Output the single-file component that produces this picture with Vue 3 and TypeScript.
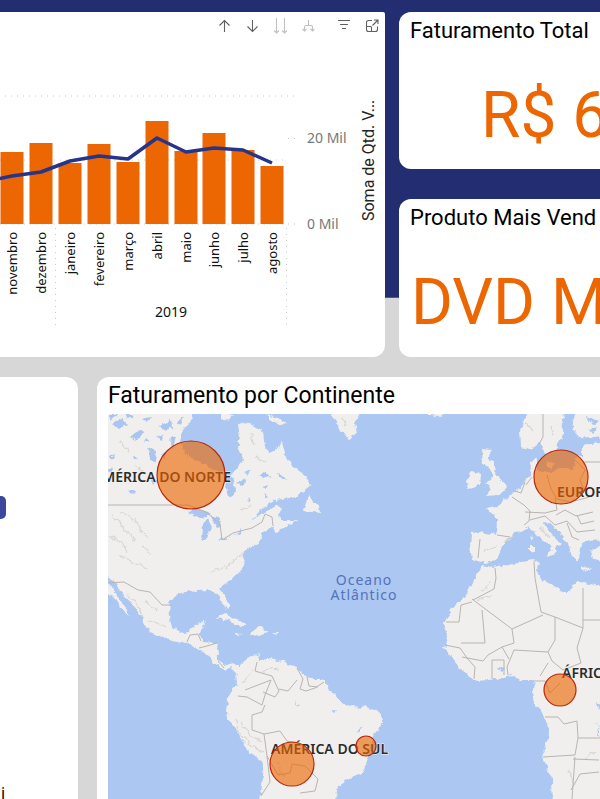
<script setup lang="ts">
interface Month {
  label: string
  x: number
  top: number
  line: number
}

interface Bubble {
  x: number
  y: number
  r: number
}

const baseline = 224
const barWidth = 23

const months: Month[] = [
  { label: 'novembro', x: 12, top: 152, line: 176 },
  { label: 'dezembro', x: 41, top: 143, line: 172 },
  { label: 'janeiro', x: 70, top: 163, line: 161 },
  { label: 'fevereiro', x: 99, top: 144, line: 156 },
  { label: 'março', x: 128, top: 162, line: 159 },
  { label: 'abril', x: 157, top: 121, line: 138 },
  { label: 'maio', x: 186, top: 151, line: 152 },
  { label: 'junho', x: 214, top: 133, line: 148 },
  { label: 'julho', x: 243, top: 150, line: 150 },
  { label: 'agosto', x: 272, top: 166, line: 163 }
]

const trend = ['-17,182', ...months.map((m) => `${m.x},${m.line}`)].join(' ')

const bubbles: Bubble[] = [
  { x: 191, y: 475, r: 34 },
  { x: 561, y: 477, r: 27 },
  { x: 560, y: 690, r: 16 },
  { x: 292, y: 764, r: 22 },
  { x: 366, y: 746, r: 10 }
]
</script>

<template>
  <main class="page">
    <section class="row top">
      <article class="card chart-card">
        <div class="toolbar">
          <button type="button" aria-label="Drill up">
            <svg viewBox="0 0 16 16"><path d="M8.500 14V2.500M3.500 7.500l5-5 5 5" /></svg>
          </button>
          <button type="button" aria-label="Drill down">
            <svg viewBox="0 0 16 16"><path d="M8.500 2v11.500M3.500 8.500l5 5 5-5" /></svg>
          </button>
          <button type="button" class="faint" aria-label="Next level">
            <svg viewBox="0 0 16 16"><path d="M4.500 0v15M2 12.500L4.500 15 7 12.500M12.500 0v15M10 12.500l2.500 2.500 2.500-2.500" /></svg>
          </button>
          <button type="button" class="faint" aria-label="Expand all">
            <svg viewBox="0 0 16 16"><path d="M8.500 2v5M4.500 13V9a1.500 1.500 0 0 1 1.500-1.500h5a1.500 1.500 0 0 1 1.500 1.500v4M2.500 11l2 2 2-2M10.500 11l2 2 2-2" /></svg>
          </button>
          <button type="button" class="apart" aria-label="Filters">
            <svg viewBox="0 0 16 16"><path d="M2 2.500h12M4 6.500h8M6 10.500h4" /></svg>
          </button>
          <button type="button" aria-label="Focus mode">
            <svg viewBox="0 0 16 16"><path d="M8 2.500H4.500a2 2 0 0 0-2 2v7a2 2 0 0 0 2 2h7a2 2 0 0 0 2-2V8.500M2.500 8.500h4a1 1 0 0 1 1 1v4M8.500 7.500l5.500-5.500M10 2h4v4" /></svg>
          </button>
        </div>
        <svg class="chart" viewBox="0 40 385 317" preserveAspectRatio="xMinYMin meet" role="img" aria-label="Soma de Qtd. Vendida">
          <g class="grid">
            <path d="M5 96H296M0 160H285M0 224H296M288 138.500H297" />
            <path d="M55.500 228V326M286.500 228V326" />
          </g>
          <rect
            v-for="m in months"
            :key="m.label"
            class="bar"
            :x="m.x - 11.5"
            :y="m.top"
            :width="barWidth"
            :height="baseline - m.top"
          />
          <polyline class="trend" :points="trend" />
          <text
            v-for="m in months"
            :key="m.label + '-label'"
            class="month"
            :transform="`translate(${m.x + 5} 232) rotate(-90)`"
          >{{ m.label }}</text>
          <text class="year" x="171" y="317">2019</text>
          <text class="tick" x="307" y="143">20 Mil</text>
          <text class="tick" x="307" y="229">0 Mil</text>
          <text class="axis" transform="translate(374 221) rotate(-90)">Soma de Qtd. V...</text>
        </svg>
      </article>

      <div class="kpis">
        <article class="card kpi total">
          <h2>Faturamento Total</h2>
          <p>R$ 6</p>
        </article>
        <article class="card kpi product">
          <h2>Produto Mais Vend</h2>
          <p>DVD M</p>
        </article>
      </div>
    </section>

    <section class="row bottom">
      <article class="card side">
        <div class="side-bar"></div>
        <span class="side-label">i</span>
      </article>

      <article class="card map-card">
        <h2>Faturamento por Continente</h2>
        <svg class="map" viewBox="108 414 492 385" preserveAspectRatio="xMinYMin slice" role="img" aria-label="Mapa">
          <defs>
            <filter id="coast" filterUnits="userSpaceOnUse" x="90" y="400" width="530" height="420">
              <feTurbulence type="fractalNoise" baseFrequency="0.16" numOctaves="3" seed="4" result="n" />
              <feDisplacementMap in="SourceGraphic" in2="n" scale="6" xChannelSelector="R" yChannelSelector="G" result="d" />
              <feGaussianBlur in="d" stdDeviation="0.4" />
            </filter>
          </defs>
          <rect class="sea" x="108" y="414" width="492" height="385" />
          <g filter="url(#coast)">
            <g class="land">
              <path d="M98 400H194L191 422 183 430 180 443 188 457 203 463 213 471 224 475 226 487 231 494 235 489 232 475 242 463 243 459 237 447 240 437 238 425 247 422 256 427 263 432 265 447 270 453 277 450 282 441 286 457 293 467 303 473 312 485 303 492 290 498 274 500 264 508 252 520 267 511 277 505 282 508 277 515 283 520 297 520 287 526 275 532 273 526 263 533 260 542 247 550 242 557 245 564 240 571 227 583 220 588 225 597 230 605 227 609 222 602 217 593 207 590 197 591 187 590 177 595 170 602 169 613 173 627 182 633 190 632 195 624 206 622 200 633 202 642 217 643 218 657 223 665 235 663 239 669 236 672 230 667 225 671 213 663 208 655 197 649 187 643 177 642 163 637 150 632 143 623 142 616 130 603 120 590 113 581 98 570Z" />
              <path d="M103 576L110 583 117 596 123 603 129 614 125 612 117 602 105 590Z" />
              <path d="M236 671L240 665 247 659 259 654 257 661 264 658 283 662 297 667 307 677 325 680 330 690 337 697 341 703 351 706 367 707 375 710 382 714 382 723 373 737 370 749 365 767 362 774 350 778 338 786 334 810H259L262 785 264 763 247 750 237 730 227 717 228 697 237 684Z" />
              <path d="M482 566L493 568 517 563 533 560 538 562 537 572 541 580 550 583 563 592 570 592 572 584 580 582 610 588V810H553L552 780 542 755 549 735 545 717 535 705 533 690 534 680 520 680 513 675 497 679 477 681 462 671 452 658 444 648 447 637 444 622 453 607 465 597 472 583Z" />
              <path d="M471 533L480 532 497 535 498 520 487 509 497 507 507 498 517 490 525 481 532 475 530 462 537 457 537 470 550 472 560 468 573 468 576 457 583 456 583 445 610 442V540L587 541 580 547 579 562 572 557 568 543 563 537 557 530 549 523 543 522 550 533 561 544 556 545 555 555 545 557 549 552 552 547 540 538 530 528 517 532 508 538 502 547 497 558 485 563 472 559 470 547Z" />
              <path d="M543 400L527 415 520 430 521 446 528 451 540 442 545 454 556 451 560 440 565 433 561 422 567 405ZM577 405L572 428 579 437 610 438V400Z" />
              <path d="M482 449L492 450 488 458 494 460 494 469 499 478 507 487 500 495 486 496 492 489 486 483 493 477 490 468 483 465ZM472 472L481 474 480 486 468 489 466 481ZM591 550L610 545V563L593 560ZM548 462L554 463 551 469 547 466ZM530 536L534 538 532 541ZM530 544L534 544 534 553 530 552ZM581 567L592 568 590 570 582 569Z" />
              <path d="M328 405L338 426 348 439 357 434 355 423 364 405ZM309 494L313 502 319 505 320 513 303 511 306 503ZM267 414L286 423 281 426 270 420ZM221 412L233 414 228 421 221 418ZM426 412L447 412 440 417 430 416Z" />
              <path d="M216 618L224 614 239 620 248 625 240 627 229 620ZM251 632L259 627 269 632 259 635 250 634ZM235 633L241 634 237 635ZM273 633L279 633 277 635Z" />
            </g>
            <g class="water">
              <path d="M188 512Q198 504 210 514L207 517Q197 519 188 512ZM208 519L203 525 202 541 207 540 211 526ZM211 516L219 518 221 526 216 527ZM218 542L226 539 233 534 228 537 221 539ZM233 536L242 530 241 534Z" />
              <path d="M112 424L122 418 127 424 118 429ZM108 470L114 466 111 473ZM130 437L141 428 143 434 136 441ZM148 447L156 451 155 464 150 459ZM160 425L171 420 172 428 164 430ZM109 458L115 453 114 460ZM171 435L176 437 173 448 170 444ZM151 476L157 481 154 485Z" />
              <path d="M142 419L151 417 148 423ZM178 421L184 416 181 425ZM259 475L266 472 270 477 263 480ZM277 474L284 476 287 480 279 478ZM226 494L233 483 235 492 230 497ZM237 483L247 478 242 486ZM265 493L269 496 266 499ZM244 471L250 469 248 475ZM128 489L136 493 131 494Z" />
              <path d="M108 414L118 414 110 420ZM124 414L134 415 128 419ZM143 441L147 438 148 443ZM156 437L163 434 162 440ZM161 454L165 452 165 459ZM133 455L138 458 134 460ZM247 497L252 500 249 503ZM262 486L268 484 266 488Z" />
              <path d="M498 667L504 668 503 673ZM586 417L600 421 593 425ZM588 430L596 427 594 433ZM295 701L300 704 299 706ZM331 711L337 710 334 714ZM357 730L362 726 358 733ZM596 701L602 705 599 711ZM597 723L600 735 603 742 598 734ZM108 596L114 604 108 606Z" />
            </g>
            <g class="relief">
              <path d="M112 516l8 6 2 8 8 3 5 9M119 513l10 2 6 8M135 517l5 12 7 8M109 535l13 8 5 8M119 555l16 9 12 4M142 545l9 9M226 570l10-12 9-5M210 573l15-7M127 594l9 9 8 15M145 601l12 10M150 620l16 7M235 719l4 13 10 12 13 8M241 724l9 11 11 6M243 683l9-13M263 670l16-2M277 763l6 15M481 591l11-9M477 600l15-5M502 543l12-7M483 552l12-6M541 529l10 9M526 423l8 8M551 426l3 10M120 441l10 12M135 465l9 7M250 433l5 11M256 456l11 7M240 510l13-5M342 418l5 8M568 770l6 13M585 759l10-7" />
            </g>
          </g>
          <g class="borders">
            <path d="M98 505H188L206 512 220 524 222 540 233 533 252 528 262 522 265 514 272 517 273 526M106 583L124 582 138 590 150 592 162 605 171 605M187 642L190 635 198 634 201 641M199 648L207 646 217 643M218 661L224 668" />
            <path d="M257 662L255 671 265 674 272 676 279 691 275 697 263 692M238 696L247 697 262 705 265 695 271 680 245 690M265 705L262 712 252 715 252 730 264 734 280 731 287 741 306 746M297 668L303 679 300 689 306 691 315 688 324 682M307 677L309 686 318 687M279 689L288 691 297 680M264 734L267 756 278 775 290 773 292 764 305 766M267 756L270 782 261 796M305 766L318 779 315 791 300 793" />
            <path d="M473 600L494 589 496 578 495 568M446 622L459 622 461 605 472 602M472 599L512 629 543 615M482 610L485 643H461M512 629L514 643 502 647 488 655 483 661 462 657M534 562L535 578 541 612 555 617 583 628V588M555 617L555 640 548 652 514 650 507 667 508 675M502 647L509 659M548 652L552 661 563 670 581 663 577 648 583 628M583 620H605M540 676L548 663M445 645L460 648 467 658 475 667 474 679M492 679V660H504V675M534 681H545L550 693 560 683M545 717L558 717 564 724 577 721 578 738 600 738M578 738L575 755 543 757M575 757L572 799M573 759L599 760M571 790L580 774 599 772" />
            <path d="M478 558L480 539M497 535L510 537M512 497L524 505 530 511 529 521 524 525M525 512L545 513 557 510 555 498M525 482L521 493 515 491M532 477L526 485M547 475L551 489 557 499 570 502 590 497M575 460L585 470 580 480 584 490M585 462H600M556 515L565 510 576 516 593 512M530 520L545 516 555 525 567 521 577 532 595 530M567 523L572 537 579 540M577 515L581 524 594 521M543 414V437L539 444" />
          </g>
          <g class="place">
            <text class="end" x="231" y="482">AMÉRICA DO NORTE</text>
            <text x="271" y="754">AMÉRICA DO SUL</text>
            <text x="557" y="497">EUROPA</text>
            <text x="562" y="678">ÁFRICA</text>
          </g>
          <g class="ocean">
            <text x="364" y="585">Oceano</text>
            <text x="364" y="600">Atlântico</text>
          </g>
          <circle v-for="b in bubbles" :key="b.x" class="bubble" :cx="b.x" :cy="b.y" :r="b.r" />
        </svg>
      </article>
    </section>
  </main>
</template>

<style>
body {
  margin: 0;
}
</style>

<style scoped>
.page {
  box-sizing: border-box;
  height: 100vh;
  padding-top: 12px;
  display: flex;
  flex-direction: column;
  gap: 20px;
  overflow: hidden;
  background: linear-gradient(#232d72 297px, #2069b8 297px, #2069b8 298px, #d7d7d7 298px);
  font-family: Roboto, "Liberation Sans", sans-serif;
}

.row {
  display: grid;
}

.top {
  grid-template-columns: 385fr 201fr;
  gap: 14px;
}

.bottom {
  flex: 1;
  min-height: 0;
  grid-template-columns: 78px minmax(0, 1fr);
  grid-template-rows: minmax(0, 1fr);
  gap: 19px;
}

.card {
  background: #fff;
  border-radius: 12px;
  overflow: hidden;
  min-width: 0;
}

.chart-card {
  border-radius: 0 2px 12px 0;
}

.toolbar {
  display: flex;
  justify-content: flex-end;
  gap: 2px;
  height: 28px;
}

.toolbar button {
  width: 26px;
  padding: 0;
  border: 0;
  background: none;
  color: #606060;
  display: grid;
  place-items: center;
}

.toolbar .faint {
  color: #c0c0c0;
}

.toolbar .apart {
  margin-left: 8px;
}

.toolbar svg {
  width: 16px;
  height: 16px;
  fill: none;
  stroke: currentColor;
  stroke-width: 1.1;
}

.chart {
  display: block;
  width: 100%;
  font-family: "Noto Sans", sans-serif;
}

.grid path {
  fill: none;
  stroke: #c8c8c8;
  stroke-dasharray: 1 5;
}

.bar {
  fill: #ec6602;
}

.trend {
  fill: none;
  stroke: #27348b;
  stroke-width: 3.5;
  stroke-linejoin: round;
}

.month {
  font-size: 13px;
  text-anchor: end;
  fill: #111;
}

.year {
  font-size: 14px;
  text-anchor: middle;
  fill: #111;
}

.tick {
  font-size: 14px;
  fill: #777;
}

.axis {
  font-family: Roboto, sans-serif;
  font-size: 16px;
  fill: #252423;
}

.kpis {
  display: grid;
  grid-template-rows: 157fr 158fr;
  gap: 30px;
  min-width: 0;
}

.kpi {
  border-radius: 12px 0 0 12px;
}

h2 {
  margin: 0;
  padding: 4px 0 0 11px;
  font-size: 22px;
  line-height: 30px;
  font-weight: 400;
  white-space: nowrap;
  color: #000;
}

.kpi p {
  margin: 0;
  padding-top: 32px;
  font-size: 64px;
  line-height: 76px;
  white-space: nowrap;
  color: #ec6602;
}

.total p {
  padding-left: 82px;
}

.product p {
  padding-left: 12px;
}

.side {
  border-radius: 0 12px 0 0;
  display: flex;
  flex-direction: column;
  justify-content: space-between;
  padding-top: 119px;
}

.side-bar {
  width: 6px;
  height: 23px;
  border-radius: 0 5px 5px 0;
  background: #3b489b;
}

.side-label {
  padding-left: 1px;
  font-family: "Noto Sans", sans-serif;
  font-size: 16px;
  line-height: 12px;
}

.map-card {
  border-radius: 12px 0 0 0;
  display: flex;
  flex-direction: column;
}

.map-card h2 {
  padding-bottom: 3px;
  font-size: 23px;
}

.map {
  display: block;
  flex: 1;
  min-height: 0;
  margin-left: 11px;
  font-family: "Noto Sans", sans-serif;
}

.sea {
  fill: #abc7f2;
}

.land {
  fill: #f0efed;
}

.water {
  fill: #a9c5f0;
}

.borders {
  fill: none;
  stroke: #b9b5b0;
  stroke-width: 1;
  stroke-linejoin: round;
}

.relief {
  fill: none;
  stroke: #d9d6d1;
  stroke-width: 1.2;
}

.place {
  font-size: 14px;
  font-weight: 600;
  fill: #2c2c2c;
  stroke: #f4f3f1;
  stroke-width: 1;
  paint-order: stroke;
}

.place .end {
  text-anchor: end;
}

.ocean {
  font-size: 14px;
  letter-spacing: 1px;
  text-anchor: middle;
  fill: #5672b6;
}

.bubble {
  fill: #ec6602;
  fill-opacity: 0.62;
  stroke: #b8290c;
  stroke-width: 1.2;
}
</style>
